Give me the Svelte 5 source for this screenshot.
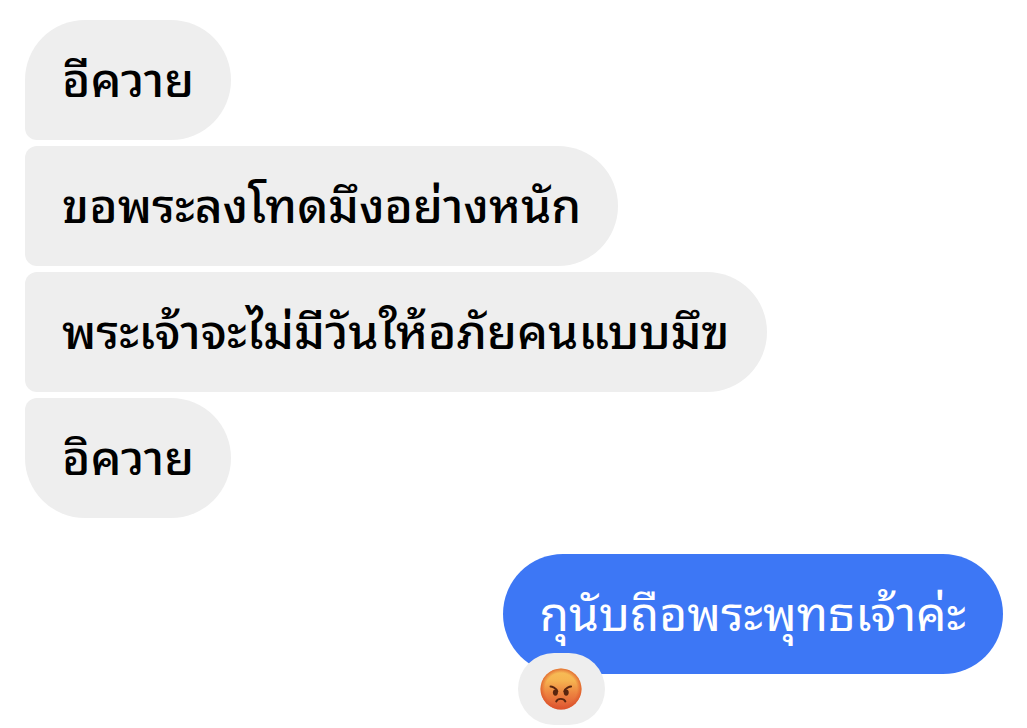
<script lang="ts">
  interface Message {
    text: string;
  }

  const received: Message[] = [
    { text: 'อีควาย' },
    { text: 'ขอพระลงโทดมึงอย่างหนัก' },
    { text: 'พระเจ้าจะไม่มีวันให้อภัยคนแบบมึฃ' },
    { text: 'อิควาย' },
  ];
  const sent: Message = { text: 'กุนับถือพระพุทธเจ้าค่ะ' };
</script>

<main class="chat">
  <div class="group received">
    {#each received as message}
      <p class="bubble">{message.text}</p>
    {/each}
  </div>

  <div class="group sent">
    <p class="bubble">{sent.text}</p>
    <button class="reaction" type="button" aria-label="😡">
      <svg width="42" height="42" viewBox="0 0 42 42" aria-hidden="true">
        <defs>
          <linearGradient id="face" x1="0" y1="0" x2="0" y2="1">
            <stop offset="0" stop-color="#f7bf58" />
            <stop offset="0.3" stop-color="#f6b350" />
            <stop offset="0.6" stop-color="#ed8440" />
            <stop offset="1" stop-color="#de5433" />
          </linearGradient>
          <radialGradient id="edge" cx="0.5" cy="0.5" r="0.5">
            <stop offset="0.78" stop-color="#e0562c" stop-opacity="0" />
            <stop offset="1" stop-color="#db5428" stop-opacity="0.75" />
          </radialGradient>
        </defs>
        <circle cx="21" cy="21" r="20.5" fill="url(#face)" />
        <circle cx="21" cy="21" r="20.5" fill="url(#edge)" />
        <g fill="#59250f">
          <ellipse cx="15.4" cy="24.6" rx="2.5" ry="3.1" />
          <ellipse cx="26.2" cy="24.6" rx="2.5" ry="3.1" />
        </g>
        <g fill="none" stroke="#59250f" stroke-width="1.9" stroke-linecap="round">
          <path d="M10.5 18.5C11.5 18.5 12.3 18.7 14 19.6C16 20.8 17.2 21.6 17.4 23.4" />
          <path d="M31.1 18.5C30.1 18.5 29.3 18.7 27.6 19.6C25.6 20.8 24.4 21.6 24.2 23.4" />
          <path d="M16.2 33.5C17.8 30 23.8 30 25.4 33.5" />
        </g>
      </svg>
    </button>
  </div>
</main>

<style>
  :global(body) {
    margin: 0;
    background: #fff;
  }

  .chat {
    padding: 20px 24px 54px 25px;
    font-family: 'Noto Sans Thai Looped', Loma, 'Noto Sans', sans-serif;
    font-size: 48px;
    color: #000;
  }

  .group {
    display: flex;
    flex-direction: column;
    align-items: flex-start;
    gap: 6px;
  }

  .bubble {
    margin: 0;
    padding: 20px 37px 28px;
    line-height: 72px;
    border-radius: 60px;
  }

  .received .bubble {
    background: #eee;
    border-top-left-radius: 12px;
    border-bottom-left-radius: 12px;
    font-weight: 500;
  }

  .received .bubble:first-child {
    border-top-left-radius: 60px;
  }

  .received .bubble:last-child {
    border-bottom-left-radius: 60px;
  }

  .sent {
    position: relative;
    width: fit-content;
    margin: 36px 0 0 auto;
  }

  .sent .bubble {
    background: #3d77f5;
    color: #fff;
  }

  /* Реакция поверх нижнего края сообщения */
  .reaction {
    position: absolute;
    top: 99px;
    left: 15px;
    display: flex;
    align-items: center;
    justify-content: center;
    width: 87px;
    height: 72px;
    padding: 0;
    border: 0;
    border-radius: 36px;
    background: #eee;
    cursor: pointer;
  }
</style>
